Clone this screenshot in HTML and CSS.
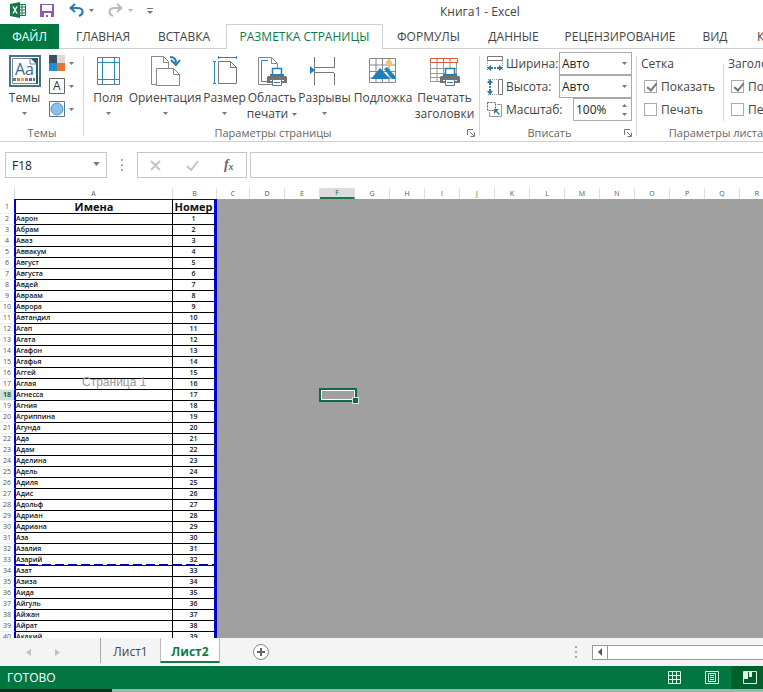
FILE: index.html
```html
<!DOCTYPE html>
<html lang="ru">
<head>
<meta charset="utf-8">
<title>Книга1 - Excel</title>
<link rel="stylesheet" href="styles.css">
</head>
<body>
<div class="app">
  <svg class="defs" aria-hidden="true">
    <symbol id="down" viewBox="0 0 5 3"><path d="M0 0h5L2.500 3z" fill="#777"/></symbol>
    <symbol id="launch" viewBox="0 0 8 8"><path d="M.5 6V.5H6M3 3l4 4M7.500 3.500v4h-4" fill="none" stroke="#777"/></symbol>
    <symbol id="printer" viewBox="0 0 22 20">
      <path d="M6.500 8V1.500h9V8" fill="#fff" stroke="#2980b0" stroke-width="1.500"/>
      <path d="M4 7h14v3H4z" fill="#2980b0"/>
      <path d="M2 9h18l1 1v6H1v-6z" fill="#727272"/>
      <path d="M4 13.500h14" stroke="#fff"/>
      <path d="M6.500 12.500h9v6h-9z" fill="#fff" stroke="#727272"/>
      <path d="M8 15.500h6" stroke="#2980b0"/>
    </symbol>
  </svg>

  <header class="titlebar">
    <div class="quick">
      <svg width="16" height="16" viewBox="0 0 16 16"><path d="M9 2.500h6.500v11H9" fill="#fff" stroke="#12784a"/><path d="M9 5h6M9 8h6M9 11h6M12 3v10" stroke="#12784a"/><path d="M0 2l10-2v16L0 14z" fill="#12784a"/><path d="M3 4.500l4 7M7 4.500l-4 7" stroke="#fff" stroke-width="1.500"/></svg>
      <svg class="save" width="14" height="15" viewBox="0 0 14 15"><path d="M0 1h14v13H0z" fill="#9058ae"/><path d="M2 2h10v6H2zM4 10h7v4H8v-2H6v2H4z" fill="#fff"/></svg>
      <svg class="undo" width="15" height="14" viewBox="0 0 15 14"><path d="M6 1L1.500 5 6 9M2 5h6c7 0 7 6 2 8" fill="none" stroke="#2878b8" stroke-width="2"/></svg>
      <svg class="arrow" width="5" height="3"><use href="#down"/></svg>
      <svg class="redo" width="15" height="14" viewBox="0 0 15 14"><path d="M9 1l4.500 4L9 9M13 5H7C0 5 0 11 5 13" fill="none" stroke="#bbb" stroke-width="2"/></svg>
      <svg class="arrow faint" width="5" height="3"><use href="#down"/></svg>
      <svg class="more" width="6" height="6" viewBox="0 0 6 6"><path d="M0 .5h6" stroke="#777"/><path d="M0 3h6L3 6z" fill="#777"/></svg>
    </div>
    <h1>Книга1 - Excel</h1>
  </header>

  <nav class="tabs">
    <a class="file" href="#">ФАЙЛ</a>
    <a class="w88" href="#">ГЛАВНАЯ</a>
    <a class="w74" href="#">ВСТАВКА</a>
    <a class="active" href="#">РАЗМЕТКА СТРАНИЦЫ</a>
    <a class="w91" href="#">ФОРМУЛЫ</a>
    <a class="w79" href="#">ДАННЫЕ</a>
    <a class="w134" href="#">РЕЦЕНЗИРОВАНИЕ</a>
    <a class="w56" href="#">ВИД</a>
    <a class="last" href="#">КОМАНДА</a>
  </nav>

  <div class="ribbon">
    <section class="group themes">
      <div class="tools">
        <button class="tool theme">
          <svg width="32" height="32" viewBox="0 0 32 32"><path d="M1 1h30v30H1z" fill="#fff" stroke="#4b7186" stroke-width="2"/><path d="M3.500 3.500h25v25h-25z" fill="#fff" stroke="#789"/><path d="M21 3h8v26h-2V9z" fill="#285a70"/><path d="M21 3v6h6" fill="#fff" stroke="#789"/><g><path d="M4 23h3v3H4z" fill="#3c9a70"/><path d="M8 23h3v3H8z" fill="#e07830"/><path d="M12 23h3v3h-3z" fill="#e8a840"/><path d="M16 23h3v3h-3z" fill="#d66"/><path d="M20 23h3v3h-3z" fill="#3c72b8"/><path d="M24 23h2v3h-2z" fill="#4a8a48"/></g><text x="6" y="20" class="aa">Aa</text></svg>
          <span>Темы</span><svg class="arrow" width="5" height="3"><use href="#down"/></svg>
        </button>
        <div class="minis">
          <button aria-label="Цвета"><svg width="16" height="16" viewBox="0 0 16 16"><path d="M0 0h8v8H0z" fill="#3a5064"/><path d="M8 0h8v8H8z" fill="#ded8d4"/><path d="M0 8h8v8H0z" fill="#1f8fd8"/><path d="M8 8h8v8H8z" fill="#f07030"/></svg><svg width="5" height="3"><use href="#down"/></svg></button>
          <button aria-label="Шрифты"><svg width="16" height="16" viewBox="0 0 16 16"><path d="M.5.5h15v15H.5z" fill="#fff" stroke="#666"/><text x="4" y="12" class="a">A</text></svg><svg width="5" height="3"><use href="#down"/></svg></button>
          <button aria-label="Эффекты"><svg width="16" height="16" viewBox="0 0 16 16"><path d="M.5.5h15v15H.5z" fill="#fff" stroke="#56788a"/><circle cx="8" cy="8" r="6" fill="#8cc0ea" stroke="#4d94c8"/></svg><svg width="5" height="3"><use href="#down"/></svg></button>
        </div>
      </div>
      <div class="caption">Темы</div>
    </section>

    <section class="group page">
      <div class="tools">
        <button class="tool w37">
          <svg width="32" height="32" viewBox="0 0 32 32"><path d="M5.500 2.500h22v27h-22z" fill="#fff" stroke="#777"/><path d="M10.500 3v26M22.500 3v26M6 7.500h21M6 24.500h21" stroke="#2b88b8"/></svg>
          <span>Поля</span><svg class="arrow" width="5" height="3"><use href="#down"/></svg>
        </button>
        <button class="tool w76">
          <svg width="32" height="32" viewBox="0 0 32 32"><path d="M2.500 1.500h12l5 5v23h-17z" fill="#fff" stroke="#888"/><path d="M14.500 1.500v6h5" fill="none" stroke="#888"/><path d="M7.500 13.500h17l6 6v11h-23z" fill="#fff" stroke="#888"/><path d="M24.500 13.500v6h6" fill="none" stroke="#888"/><path d="M21 2c4 0 6 2 6 6M22 5l5 5 4-5" fill="none" stroke="#2b78a8" stroke-width="2"/></svg>
          <span>Ориентация</span><svg class="arrow" width="5" height="3"><use href="#down"/></svg>
        </button>
        <button class="tool w43">
          <svg width="32" height="32" viewBox="0 0 32 32"><path d="M9.500 6.500h12l6 6v16h-18z" fill="#fff" stroke="#777"/><path d="M21.500 6.500v6h6" fill="none" stroke="#777"/><path d="M9 2.500h19M9.500 1v3M27.500 1v3M5.500 6v23M4 6.500h3M4 28.500h3" stroke="#2b88b8"/></svg>
          <span>Размер</span><svg class="arrow" width="5" height="3"><use href="#down"/></svg>
        </button>
        <button class="tool w52">
          <svg width="32" height="32" viewBox="0 0 32 32"><path d="M2.500 2.500h13l6 6v21h-19z" fill="#fff" stroke="#888"/><path d="M15.500 2.500v6h6" fill="none" stroke="#888"/><path d="M12 5.500H5.500v21H12" fill="none" stroke="#2b88b8"/><use href="#printer" x="10" y="12" width="22" height="20"/></svg>
          <span>Область</span><span class="second">печати <svg width="5" height="3"><use href="#down"/></svg></span>
        </button>
        <button class="tool w53">
          <svg width="32" height="32" viewBox="0 0 32 32"><path d="M5.500 2v28M25.500 2v11M25.500 30V18M6 12.500h19M6 17.500h19" fill="none" stroke="#777"/><path d="M1 11l5 4-5 4z" fill="#2080c0"/></svg>
          <span>Разрывы</span><svg class="arrow" width="5" height="3"><use href="#down"/></svg>
        </button>
        <button class="tool w64">
          <svg width="32" height="32" viewBox="0 0 32 32"><path d="M2.500 3.500h26v24h-26zM9 3v25M15.500 3v25M22 3v25M3 10h25M3 16.500h25M3 23h25" fill="#fff" stroke="#888"/><path d="M4 24l9-11 10 11z" fill="#1a80ba"/><path d="M17 14l3-2 8 9v3h-3z" fill="#1a80ba"/><circle cx="22" cy="8" r="3" fill="#f6bd68"/></svg>
          <span>Подложка</span>
        </button>
        <button class="tool w59">
          <svg width="32" height="32" viewBox="0 0 32 32"><path d="M1.500 8v18.500h26V8M8 8v18M14.500 8v18M21 8v18M2 13.500h25M2 18.500h25M2 22.500h25" fill="#fff" stroke="#999"/><path d="M1.500 3.500h27v4h-27zM8 3v5M14.500 3v5M21 3v5" fill="#fff" stroke="#dc5a3c"/><use href="#printer" x="10" y="12" width="22" height="20"/></svg>
          <span>Печатать</span><span class="second">заголовки</span>
        </button>
      </div>
      <div class="caption">Параметры страницы</div>
      <button class="launch" aria-label="Параметры страницы"><svg width="8" height="8"><use href="#launch"/></svg></button>
    </section>

    <section class="group fit">
      <div class="rows">
        <div class="row">
          <svg width="16" height="16" viewBox="0 0 16 16"><path d="M.5.5h15v4H.5z" fill="none" stroke="#777"/><path d="M.5 5v10M15.500 5v10" stroke="#999" stroke-dasharray="1 1"/><path d="M0 12l4-3v2h2v2H4v2zM16 12l-4-3v2h-2v2h2v2z" fill="#2878a8"/><path d="M7 11h2v2H7z" fill="#777"/></svg>
          <label for="width">Ширина:</label>
          <span class="combo"><select id="width"><option>Авто</option></select><svg width="5" height="3"><use href="#down"/></svg></span>
        </div>
        <div class="row">
          <svg width="16" height="16" viewBox="0 0 16 16"><path d="M11.500.5h4v15h-4z" fill="none" stroke="#777"/><path d="M1 .5h10M1 15.500h10" stroke="#999" stroke-dasharray="1 1"/><path d="M3 0l3 4H4v2H2V4H0zM3 16l3-4H4v-2H2v2H0z" fill="#2878a8"/><path d="M2 7h2v2H2z" fill="#777"/></svg>
          <label for="height">Высота:</label>
          <span class="combo"><select id="height"><option>Авто</option></select><svg width="5" height="3"><use href="#down"/></svg></span>
        </div>
        <div class="row">
          <svg width="16" height="16" viewBox="0 0 16 16"><path d="M10 2.500h4.500v12H2.500V10" fill="none" stroke="#999"/><path d="M.5.500h8v8h-8z" fill="#fff" stroke="#666" stroke-dasharray="2 1"/><path d="M7 7h5l-2 2 3 3-1 1-3-3-2 2z" fill="#2a8a80"/></svg>
          <label for="scale">Масштаб:</label>
          <span class="combo spin"><input id="scale" type="text" value="100%"><svg width="5" height="12" viewBox="0 0 5 12"><path d="M0 3h5L2.500 0zM0 9h5l-2.500 3z" fill="#777"/></svg></span>
        </div>
      </div>
      <div class="caption">Вписать</div>
      <button class="launch" aria-label="Вписать"><svg width="8" height="8"><use href="#launch"/></svg></button>
    </section>

    <section class="group sheetopts">
      <div class="checks">
        <fieldset>
          <legend>Сетка</legend>
          <label><input type="checkbox" checked>Показать</label>
          <label><input type="checkbox">Печать</label>
        </fieldset>
        <fieldset>
          <legend>Заголовки</legend>
          <label><input type="checkbox" checked>Показать</label>
          <label><input type="checkbox">Печать</label>
        </fieldset>
      </div>
      <div class="caption">Параметры листа</div>
    </section>
  </div>

  <div class="formulabar">
    <span class="namebox"><input type="text" value="F18" aria-label="Имя"><svg width="7" height="4" viewBox="0 0 5 3"><use href="#down"/></svg></span>
    <span class="dots"></span>
    <span class="fx">
      <button aria-label="Отмена"><svg width="11" height="11" viewBox="0 0 11 11"><path d="M1 1l9 9M10 1l-9 9" stroke="#c4c4c4" stroke-width="2"/></svg></button>
      <button aria-label="Ввод"><svg width="13" height="11" viewBox="0 0 13 11"><path d="M1 6l4 4 7-9" fill="none" stroke="#c4c4c4" stroke-width="2"/></svg></button>
      <button class="fn">f<sub>x</sub></button>
    </span>
    <input class="formula" type="text" aria-label="Строка формул">
  </div>

  <main class="sheet">
    <table class="grid">
      <colgroup id="cols"><col class="c-num"><col class="c-name"><col class="c-no"><col class="c-first"></colgroup>
      <thead><tr id="heads"></tr></thead>
      <tbody id="body"></tbody>
    </table>
    <div class="watermark">Страница 1</div>
  </main>

  <div class="sheetbar">
    <button class="prev" aria-label="Назад"><svg width="5" height="7" viewBox="0 0 5 7"><path d="M5 0v7L0 3.500z" fill="#c0c0c0"/></svg></button>
    <button class="next" aria-label="Вперёд"><svg width="5" height="7" viewBox="0 0 5 7"><path d="M0 0v7l5-3.500z" fill="#c0c0c0"/></svg></button>
    <a class="sheettab first" href="#">Лист1</a>
    <a class="sheettab current" href="#">Лист2</a>
    <button class="add" aria-label="Новый лист"><svg width="16" height="16" viewBox="0 0 16 16"><circle cx="8" cy="8" r="7.500" fill="#fff" stroke="#888"/><path d="M8 4v8M4 8h8" stroke="#666" stroke-width="2"/></svg></button>
    <span class="dots"></span>
    <div class="scroll"><button aria-label="Прокрутить влево"><svg width="4" height="8" viewBox="0 0 4 8"><path d="M4 0v8L0 4z" fill="#555"/></svg></button><span></span></div>
  </div>

  <footer class="status">
    <span>ГОТОВО</span>
    <button class="view" aria-label="Обычный"><svg width="13" height="13" viewBox="0 0 13 13"><path d="M.5.5h12v12H.5zM4.500 0v13M8.500 0v13M0 4.500h13M0 8.500h13" fill="none" stroke="#e4f5e8"/></svg></button>
    <button class="view" aria-label="Разметка страницы"><svg width="14" height="13" viewBox="0 0 14 13"><path d="M.5.500h13v12H.5zM3.500 2.500h7v8h-7zM5 4.500h4M5 6.500h4M5 8.500h4" fill="none" stroke="#e4f5e8"/></svg></button>
    <button class="view on" aria-label="Страничный режим"><svg width="14" height="13" viewBox="0 0 14 13"><path d="M.5.500h13v12H.5z" fill="none" stroke="#e4f5e8"/><path d="M1 1h4v7H1zM6 1h3v5H6z" fill="#e4f5e8"/></svg></button>
  </footer>
  <div class="taskbar"><span></span></div>
</div>
<script src="app.js"></script>
</body>
</html>
```
FILE: app.js
```js
const names = ["Аарон", "Абрам", "Аваз", "Аввакум", "Август", "Августа", "Авдей", "Авраам", "Аврора", "Автандил", "Агап", "Агата", "Агафон", "Агафья", "Аггей", "Аглая", "Агнесса", "Агния", "Агриппина", "Агунда", "Ада", "Адам", "Аделина", "Адель", "Адиля", "Адис", "Адольф", "Адриан", "Адриана", "Аза", "Азалия", "Азарий", "Азат", "Азиза", "Аида", "Айгуль", "Айжан", "Айрат", "Акакий"];
const letters = "ABCDEFGHIJKLMNOPQR".split("");

function cell(row, tag, text, className) {
  const el = document.createElement(tag);
  el.textContent = text;
  if (className) el.className = className;
  row.appendChild(el);
}

const heads = document.getElementById("heads");
const cols = document.getElementById("cols");
cell(heads, "th", "", "corner");
letters.forEach((letter, i) => {
  cell(heads, "th", letter, letter === "F" ? "picked" : "");
  if (i > 2) cols.appendChild(document.createElement("col"));
});

const body = document.getElementById("body");
for (let n = 1; n <= names.length + 1; n++) {
  const row = document.createElement("tr");
  if (n === 1) row.className = "title";
  if (n === 33) row.className = "pagebreak";
  cell(row, "th", n, n === 18 ? "num picked" : "num");
  cell(row, "td", n === 1 ? "Имена" : names[n - 2], "name");
  cell(row, "td", n === 1 ? "Номер" : n - 1, "no");
  for (const letter of letters.slice(2)) {
    cell(row, "td", "", n === 18 && letter === "F" ? "selected" : "");
  }
  body.appendChild(row);
}
```
FILE: styles.css
```css
* { box-sizing: border-box; }
body { margin: 0; font: 12px/16px "Open Sans", "Noto Sans", sans-serif; color: #444; background: #fff; }
a { color: inherit; text-decoration: none; }
button { padding: 0; border: 0; background: none; font: inherit; color: inherit; }
input, select { margin: 0; font: inherit; color: #222; border-radius: 0; }
svg { display: block; flex: none; }
.defs { position: absolute; width: 0; height: 0; }
.app { display: flex; flex-direction: column; height: 100vh; overflow: hidden; }

.titlebar { display: flex; align-items: center; height: 24px; flex: none; padding-left: 10px; }
.quick { display: flex; align-items: center; flex: 1; margin-top: -4px; }
.save { margin-left: 14px; }
.undo { margin-left: 15px; }
.redo { margin-left: 14px; }
.quick .arrow { margin-left: 5px; }
.faint { opacity: .5; }
.more { margin-left: 14px; margin-top: 2px; }
h1 { margin: 0; width: 323px; font-size: 12px; line-height: 22px; font-weight: 400; }

.tabs { display: flex; height: 25px; flex: none; border-bottom: 1px solid #d0d0d0; white-space: nowrap; line-height: 25px; text-align: center; }
.tabs a { flex: none; height: 25px; }
.tabs .file { width: 59px; background: #007840; color: #fff; }
.tabs .active { width: 157px; margin-left: 5px; color: #0c7a48; background: #fff; border: 1px solid #d0d0d0; border-bottom: 0; line-height: 24px; }
.w88 { width: 88px; }
.w74 { width: 74px; }
.w79 { width: 79px; }
.w91 { width: 91px; }
.w134 { width: 134px; }
.w56 { width: 56px; }
.tabs .last { padding-left: 14px; }

.ribbon { display: flex; height: 93px; flex: none; border-bottom: 1px solid #d0d0d0; overflow: hidden; }
.group { position: relative; display: flex; flex-direction: column; flex: none; padding-top: 6px; white-space: nowrap; }
.group::after { content: ""; position: absolute; right: 0; top: 7px; bottom: 5px; width: 1px; background: #d8d8d8; }
.themes { width: 84px; }
.page { width: 396px; }
.fit { width: 157px; }
.sheetopts { width: 158px; }
.sheetopts::after { content: none; }
.caption { margin-top: auto; font-size: 11px; line-height: 16px; text-align: center; color: #666; }
.page .caption, .fit .caption { padding-right: 18px; }
.launch { position: absolute; right: 5px; bottom: 4px; }
.tools { display: flex; padding-left: 5px; }
.themes .tools { padding-left: 8px; gap: 8px; }
.tool { display: flex; flex-direction: column; align-items: center; height: 70px; flex: none; }
.tool > span { line-height: 16px; margin-top: 3px; }
.tool > .second { display: flex; align-items: center; gap: 4px; margin-top: 0; }
.tool > .arrow { margin-top: 6px; }
.theme { width: 33px; }
.w37 { width: 38px; }
.w76 { width: 76px; }
.w43 { width: 43px; }
.w52 { width: 52px; }
.w53 { width: 53px; }
.w64 { width: 64px; }
.w59 { width: 59px; }
.minis { display: flex; flex-direction: column; gap: 7px; }
.minis button { display: flex; align-items: center; gap: 4px; }
.aa { font: 16px "Open Sans", sans-serif; fill: #39688a; }
.a { font: 12px "Open Sans", sans-serif; fill: #333; }

.rows { margin-top: -3px; padding: 0 5px 0 7px; }
.row { display: flex; align-items: center; height: 23px; gap: 3px; }
.row label { flex: 1; min-width: 0; }
.combo { position: relative; display: block; flex: none; width: 73px; height: 23px; margin-left: -3px; }
.combo select, .combo input { appearance: none; display: block; width: 100%; height: 23px; padding: 0 2px; border: 1px solid #aaa; background: #fff; }
.combo svg { position: absolute; right: 5px; top: 10px; }
.combo.spin { width: 59px; }
.combo.spin svg { top: 6px; }

.checks { display: flex; margin-top: -2px; }
fieldset { margin: 0; padding: 0 0 0 4px; border: 0; width: 86px; flex: none; display: flex; flex-direction: column; }
fieldset + fieldset { border-left: 1px solid #d8d8d8; }
legend { padding: 0; line-height: 22px; }
fieldset label { display: flex; align-items: center; gap: 4px; height: 23px; padding-left: 3px; }
fieldset input { appearance: none; position: relative; flex: none; width: 13px; height: 13px; border: 1px solid #aaa; background: #fff; }
fieldset input:checked::after { content: ""; position: absolute; left: 4px; top: 0; width: 4px; height: 8px; border: solid #777; border-width: 0 2px 2px 0; transform: rotate(40deg); }

.formulabar { display: flex; height: 46px; flex: none; padding: 10px 0 10px 5px; }
.namebox { position: relative; width: 102px; }
.namebox input { width: 100%; height: 26px; padding: 0 6px; border: 1px solid #c6c6c6; }
.namebox svg { position: absolute; right: 7px; top: 10px; }
.dots { width: 2px; height: 12px; background: repeating-linear-gradient(#aaa 0 2px, transparent 2px 5px); }
.formulabar .dots { margin: 7px 14px 0; }
.fx { display: flex; align-items: center; justify-content: space-around; width: 110px; height: 26px; border: 1px solid #c6c6c6; }
.fn { font: italic bold 14px/16px "Liberation Serif", serif; color: #666; }
.fn sub { font-size: 10px; line-height: 8px; vertical-align: -1px; }
.formula { flex: 1; min-width: 0; height: 26px; margin-left: 3px; border: 1px solid #c6c6c6; border-right: 0; }

.sheet { position: relative; flex: 1; min-height: 0; overflow: hidden; background: #a0a0a0; }
.grid { table-layout: fixed; width: 775px; border-collapse: separate; border-spacing: 0; font-size: 7px; line-height: 10px; color: #111; }
col { width: 35px; }
.c-num { width: 15px; }
.c-name { width: 158px; }
.c-no { width: 44px; }
.c-first { width: 33px; }
th, td { padding: 0; height: 11px; overflow: hidden; white-space: nowrap; }
thead th { background: #fff; font-weight: 400; color: #555; border-right: 1px solid #ddd; }
thead .picked { background: #dcdcdc; color: #0c6b43; border-bottom: 2px solid #217346; line-height: 9px; }
.num { background: #fff; font-weight: 400; color: #555; border-right: 1px solid #00c; border-bottom: 1px solid #eee; }
.num.picked { background: #cfe0d6; color: #0c6b43; font-weight: 700; }
.name, .no { background: #fff; border-bottom: 1px solid #000; border-right: 1px solid #000; font-weight: 600; }
.name { border-left: 1px solid #00c; }
.no { text-align: center; border-right: 3px solid #00c; }
.title th, .title td { height: 15px; line-height: 13px; }
.title .name, .title .no { border-top: 1px solid #00c; text-align: center; font-size: 11px; font-weight: 700; }
.pagebreak .name, .pagebreak .no { border-bottom-color: #00a; background: repeating-linear-gradient(90deg, #00a 0 9px, #fff 9px 13px) bottom / 100% 1px no-repeat #fff; }
.selected { position: relative; overflow: visible; }
.selected::before { content: ""; position: absolute; inset: -2px -2px -1px -1px; border: 2px solid #0c6b43; box-shadow: inset 0 0 0 1px #fff; }
.selected::after { content: ""; position: absolute; right: -3px; bottom: -2px; width: 5px; height: 5px; background: #0c6b43; box-shadow: 0 0 0 1px #ddd; }
.watermark { position: absolute; left: 82px; top: 186px; font: 12px/16px "Liberation Sans", sans-serif; color: #999; }

.sheetbar { display: flex; align-items: center; height: 28px; flex: none; background: #f4f4f4; }
.prev { margin-left: 26px; }
.next { margin-left: 24px; }
.sheettab { height: 25px; line-height: 27px; width: 60px; text-align: center; align-self: flex-start; }
.first { margin-left: 40px; border-left: 1px solid #aaa; }
.current { background: #fff; border: 1px solid #bbb; border-top: 0; border-bottom: 2px solid #217346; color: #0c7a48; font-weight: 700; }
.add { margin-left: 33px; margin-right: auto; }
.scroll { display: flex; width: 171px; height: 15px; margin-left: 15px; border: 1px solid #999; border-right: 0; background: #fff; }
.scroll button { display: flex; align-items: center; justify-content: center; width: 15px; border-right: 1px solid #999; }

.status { display: flex; align-items: center; height: 23px; flex: none; padding-left: 7px; background: #007640; color: #fff; }
.status span { margin-right: auto; }
.view { display: flex; align-items: center; justify-content: center; width: 38px; height: 23px; }
.view.on { width: 32px; padding-left: 6px; background: #00602c; }
.taskbar { height: 3px; flex: none; background: #9db5aa; }
.taskbar span { display: block; width: 112px; height: 3px; background: #062a1c; }
```
